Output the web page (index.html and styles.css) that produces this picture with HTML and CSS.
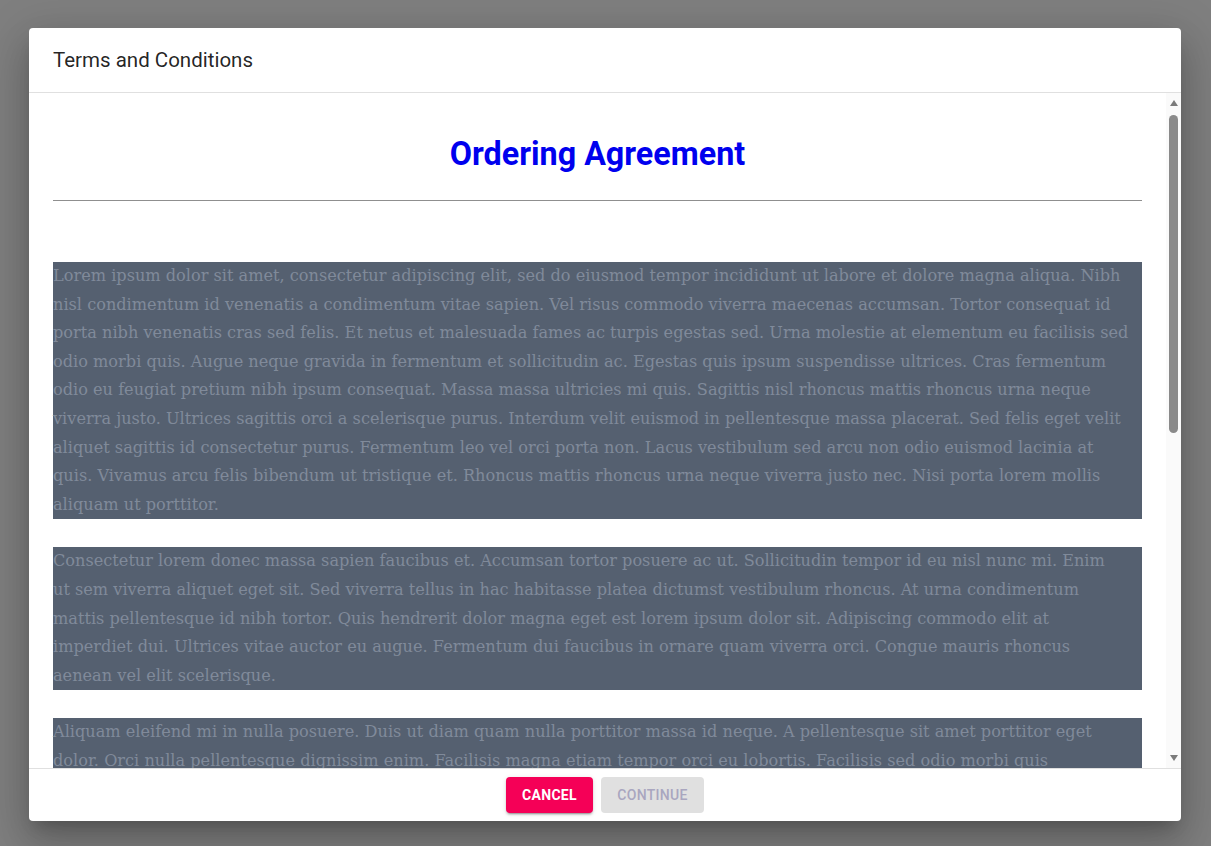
FILE: index.html
```html
<!DOCTYPE html>
<html lang="en">
<head>
<meta charset="utf-8">
<title>Terms and Conditions</title>
<link rel="stylesheet" href="styles.css">
</head>
<body>
<div class="backdrop">
  <div class="dialog" role="dialog" aria-labelledby="dlg-title">
    <div class="dialog-title" id="dlg-title">Terms and Conditions</div>
    <div class="dialog-body">
      <div class="dialog-content">
        <h2 class="agreement-heading">Ordering Agreement</h2>
        <hr class="divider">
        <p class="para">Lorem ipsum dolor sit amet, consectetur adipiscing elit, sed do eiusmod tempor incididunt ut labore et dolore magna aliqua. Nibh<br>nisl condimentum id venenatis a condimentum vitae sapien. Vel risus commodo viverra maecenas accumsan. Tortor consequat id<br>porta nibh venenatis cras sed felis. Et netus et malesuada fames ac turpis egestas sed. Urna molestie at elementum eu facilisis sed<br>odio morbi quis. Augue neque gravida in fermentum et sollicitudin ac. Egestas quis ipsum suspendisse ultrices. Cras fermentum<br>odio eu feugiat pretium nibh ipsum consequat. Massa massa ultricies mi quis. Sagittis nisl rhoncus mattis rhoncus urna neque<br>viverra justo. Ultrices sagittis orci a scelerisque purus. Interdum velit euismod in pellentesque massa placerat. Sed felis eget velit<br>aliquet sagittis id consectetur purus. Fermentum leo vel orci porta non. Lacus vestibulum sed arcu non odio euismod lacinia at<br>quis. Vivamus arcu felis bibendum ut tristique et. Rhoncus mattis rhoncus urna neque viverra justo nec. Nisi porta lorem mollis<br>aliquam ut porttitor.</p>
        <p class="para">Consectetur lorem donec massa sapien faucibus et. Accumsan tortor posuere ac ut. Sollicitudin tempor id eu nisl nunc mi. Enim<br>ut sem viverra aliquet eget sit. Sed viverra tellus in hac habitasse platea dictumst vestibulum rhoncus. At urna condimentum<br>mattis pellentesque id nibh tortor. Quis hendrerit dolor magna eget est lorem ipsum dolor sit. Adipiscing commodo elit at<br>imperdiet dui. Ultrices vitae auctor eu augue. Fermentum dui faucibus in ornare quam viverra orci. Congue mauris rhoncus<br>aenean vel elit scelerisque.</p>
        <p class="para">Aliquam eleifend mi in nulla posuere. Duis ut diam quam nulla porttitor massa id neque. A pellentesque sit amet porttitor eget<br>dolor. Orci nulla pellentesque dignissim enim. Facilisis magna etiam tempor orci eu lobortis. Facilisis sed odio morbi quis<br>commodo odio aenean sed. Egestas integer eget aliquet nibh praesent tristique magna sit amet. Nunc sed velit dignissim<br>sodales ut eu sem integer. Tincidunt lobortis feugiat vivamus at augue eget arcu dictum varius. Amet nisl purus in mollis nunc<br>sed id semper risus. Quam vulputate dignissim suspendisse in est ante in nibh mauris.</p>
      </div>
      <div class="scrollbar" aria-hidden="true">
        <div class="sb-button sb-up"></div>
        <div class="sb-track">
          <div class="sb-thumb"></div>
        </div>
        <div class="sb-button sb-down"></div>
      </div>
    </div>
    <div class="dialog-actions">
      <button class="btn btn-cancel" type="button">Cancel</button>
      <button class="btn btn-continue" type="button" disabled>Continue</button>
    </div>
  </div>
</div>
</body>
</html>
```
FILE: styles.css
```css
* { box-sizing: border-box; }
html, body {
  margin: 0;
  padding: 0;
  height: 100%;
}
body {
  font-family: Roboto, "Liberation Sans", sans-serif;
  background: #ffffff;
}
.backdrop {
  height: 100%;
  background: rgba(0, 0, 0, 0.5);
  display: flex;
  justify-content: flex-start;
  align-items: flex-start;
  padding: 28px 0 0 29px;
}
.dialog {
  width: 1152px;
  height: 793px;
  background: #ffffff;
  border-radius: 4px;
  display: flex;
  flex-direction: column;
  overflow: hidden;
  box-shadow: 0 11px 15px -7px rgba(0,0,0,0.2), 0 24px 38px 3px rgba(0,0,0,0.14), 0 9px 46px 8px rgba(0,0,0,0.12);
}
.dialog-title {
  flex: none;
  height: 65px;
  padding: 0 24px 1px;
  display: flex;
  align-items: center;
  font-size: 20.5px;
  color: rgba(0, 0, 0, 0.87);
  border-bottom: 1px solid #e0e0e0;
}
.dialog-body {
  flex: 1;
  min-height: 0;
  display: flex;
}
.dialog-content {
  flex: 1;
  min-width: 0;
  overflow: hidden;
  padding: 20px 24px 8px;
}
.scrollbar {
  flex: none;
  width: 15px;
  background: #fafafa;
  display: flex;
  flex-direction: column;
}
.sb-button {
  flex: none;
  height: 17px;
  display: flex;
  justify-content: center;
}
.sb-up {
  align-items: flex-end;
  padding-bottom: 4px;
}
.sb-up::before {
  content: "";
  width: 0;
  height: 0;
  border-left: 4.5px solid transparent;
  border-right: 4.5px solid transparent;
  border-bottom: 6px solid #7b7b7b;
}
.sb-down {
  align-items: flex-start;
  padding-top: 4px;
}
.sb-down::before {
  content: "";
  width: 0;
  height: 0;
  border-left: 4.5px solid transparent;
  border-right: 4.5px solid transparent;
  border-top: 6px solid #7b7b7b;
}
.sb-track {
  flex: 1;
  padding: 5px 3px 0;
}
.sb-thumb {
  height: 318px;
  background: #8a8a8a;
  border-radius: 5px;
}
.agreement-heading {
  margin: 22px 0 0;
  text-align: center;
  font-family: Roboto, "Liberation Sans", sans-serif;
  font-weight: 700;
  font-size: 32.3px;
  line-height: 38px;
  color: #0000ee;
}
.divider {
  margin: 27px 0 61px;
  border: none;
  border-top: 1px solid #8f8f8f;
  height: 0;
}
.para {
  margin: 0 0 28px;
  background: #556070;
  color: #808a9a;
  font-family: "DejaVu Serif", Georgia, serif;
  font-size: 16.15px;
  line-height: 28.6px;
}
.dialog-actions {
  flex: none;
  height: 53px;
  border-top: 1px solid #e0e0e0;
  display: flex;
  justify-content: center;
  align-items: center;
  gap: 8px;
}
.btn {
  height: 36px;
  border: none;
  border-radius: 4px;
  font-family: Roboto, "Liberation Sans", sans-serif;
  font-size: 14px;
  font-weight: 700;
  text-transform: uppercase;
  letter-spacing: 0.3px;
  padding: 0 16px;
}
.btn-cancel {
  width: 87px;
  background: #f50057;
  color: #ffffff;
  box-shadow: 0 3px 1px -2px rgba(0,0,0,0.2), 0 2px 2px 0 rgba(0,0,0,0.14), 0 1px 5px 0 rgba(0,0,0,0.12);
}
.btn-continue {
  width: 103px;
  background: #e0e0e0;
  color: #a9a6bf;
  font-weight: 500;
}
```
